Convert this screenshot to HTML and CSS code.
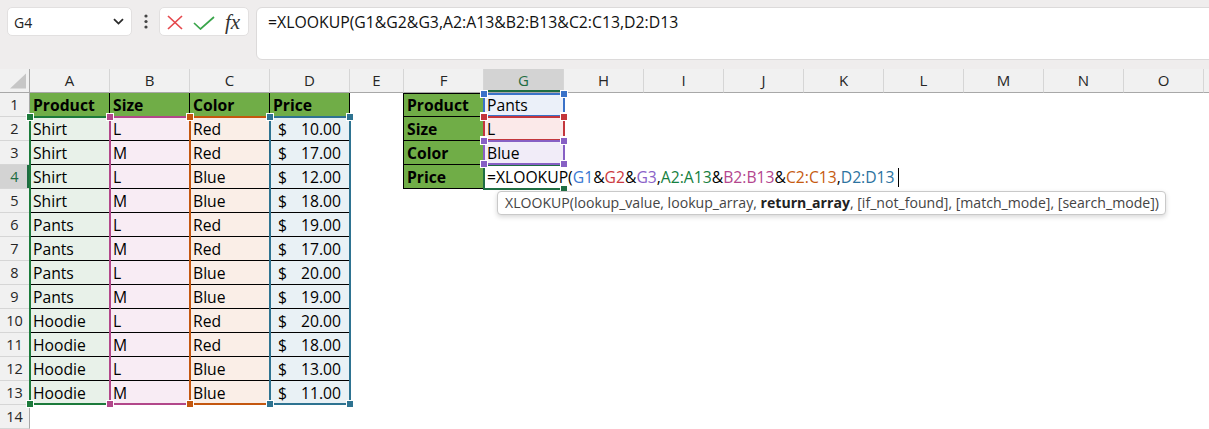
FILE: index.html
```html
<!DOCTYPE html>
<html>
<head>
<meta charset="utf-8">
<link rel="stylesheet" href="styles.css">
</head>
<body>
<div class="toolbar">
  <div class="namebox"><span>G4</span>
    <svg class="chev" width="11" height="7" viewBox="0 0 11 7"><path d="M1 1.2 L5.5 5.6 L10 1.2" fill="none" stroke="#2b2b2b" stroke-width="1.8"/></svg>
  </div>
  <div class="dots"><svg width="4" height="15" viewBox="0 0 4 15"><circle cx="2" cy="2" r="1.6" fill="#444"/><circle cx="2" cy="7.5" r="1.6" fill="#444"/><circle cx="2" cy="13" r="1.6" fill="#444"/></svg></div>
  <div class="fbtns">
    <svg class="ix" width="16" height="15" viewBox="0 0 16 15"><path d="M1 1 L15 14 M15 1 L1 14" stroke="#e5484d" stroke-width="1.7" fill="none"/></svg>
    <svg class="ic" width="22" height="14" viewBox="0 0 22 14"><path d="M1 7 L7.5 13 L21 1" stroke="#3aa54b" stroke-width="1.7" fill="none"/></svg>
    <span class="fx">fx</span>
  </div>
  <div class="fbar">=XLOOKUP(G1&amp;G2&amp;G3,A2:A13&amp;B2:B13&amp;C2:C13,D2:D13</div>
</div>

<div class="sheet">
  <div class="grid">
    <div class="corner"><svg width="30" height="23" viewBox="0 0 30 23"><path d="M10 19.5 L26 19.5 L26 4.5 Z" fill="#c6c6c6"/></svg></div>
    <div class="ch">A</div><div class="ch">B</div><div class="ch">C</div><div class="ch">D</div><div class="ch">E</div><div class="ch">F</div><div class="ch sel">G</div><div class="ch">H</div><div class="ch">I</div><div class="ch">J</div><div class="ch">K</div><div class="ch">L</div><div class="ch">M</div><div class="ch">N</div><div class="ch">O</div><div class="ch last"></div>

    <div class="rh">1</div>
    <div class="c g">Product</div><div class="c g">Size</div><div class="c g">Color</div><div class="c g">Price</div>
    <div class="sp"></div>
    <div class="c g ff ft">Product</div><div class="c g1">Pants</div>

    <div class="rh">2</div>
    <div class="c fa">Shirt</div><div class="c fb">L</div><div class="c fc">Red</div><div class="c fd"><span>$</span><span>10.00</span></div>
    <div class="sp"></div>
    <div class="c g ff">Size</div><div class="c g2">L</div>

    <div class="rh">3</div>
    <div class="c fa">Shirt</div><div class="c fb">M</div><div class="c fc">Red</div><div class="c fd"><span>$</span><span>17.00</span></div>
    <div class="sp"></div>
    <div class="c g ff">Color</div><div class="c g3">Blue</div>

    <div class="rh sel">4</div>
    <div class="c fa">Shirt</div><div class="c fb">L</div><div class="c fc">Blue</div><div class="c fd"><span>$</span><span>12.00</span></div>
    <div class="sp"></div>
    <div class="c g ff">Price</div>
    <div class="c edit"><span>=XLOOKUP(</span><span class="k1">G1</span>&amp;<span class="k2">G2</span>&amp;<span class="k3">G3</span>,<span class="k4">A2:A13</span>&amp;<span class="k5">B2:B13</span>&amp;<span class="k6">C2:C13</span>,<span class="k7">D2:D13</span><i class="caret"></i></div>

    <div class="rh">5</div>
    <div class="c fa">Shirt</div><div class="c fb">M</div><div class="c fc">Blue</div><div class="c fd"><span>$</span><span>18.00</span></div>

    <div class="rh">6</div>
    <div class="c fa">Pants</div><div class="c fb">L</div><div class="c fc">Red</div><div class="c fd"><span>$</span><span>19.00</span></div>

    <div class="rh">7</div>
    <div class="c fa">Pants</div><div class="c fb">M</div><div class="c fc">Red</div><div class="c fd"><span>$</span><span>17.00</span></div>

    <div class="rh">8</div>
    <div class="c fa">Pants</div><div class="c fb">L</div><div class="c fc">Blue</div><div class="c fd"><span>$</span><span>20.00</span></div>

    <div class="rh">9</div>
    <div class="c fa">Pants</div><div class="c fb">M</div><div class="c fc">Blue</div><div class="c fd"><span>$</span><span>19.00</span></div>

    <div class="rh">10</div>
    <div class="c fa">Hoodie</div><div class="c fb">L</div><div class="c fc">Red</div><div class="c fd"><span>$</span><span>20.00</span></div>

    <div class="rh">11</div>
    <div class="c fa">Hoodie</div><div class="c fb">M</div><div class="c fc">Red</div><div class="c fd"><span>$</span><span>18.00</span></div>

    <div class="rh">12</div>
    <div class="c fa">Hoodie</div><div class="c fb">L</div><div class="c fc">Blue</div><div class="c fd"><span>$</span><span>13.00</span></div>

    <div class="rh">13</div>
    <div class="c fa">Hoodie</div><div class="c fb">M</div><div class="c fc">Blue</div><div class="c fd"><span>$</span><span>11.00</span></div>

    <div class="rh">14</div>
  </div>

  <div class="hl">
    <div class="r ra"><i class="tl"></i><i class="tr"></i><i class="bl"></i><i class="br"></i></div>
    <div class="r rb"><i class="tl"></i><i class="tr"></i><i class="bl"></i><i class="br"></i></div>
    <div class="r rc"><i class="tl"></i><i class="tr"></i><i class="bl"></i><i class="br"></i></div>
    <div class="r rd"><i class="tl"></i><i class="tr"></i><i class="bl"></i><i class="br"></i></div>
    <div class="act"><i class="br"></i></div>
    <div class="r rg1"><i class="tl"></i><i class="tr"></i><i class="bl"></i><i class="br"></i></div>
    <div class="r rg2"><i class="tl"></i><i class="tr"></i><i class="bl"></i><i class="br"></i></div>
    <div class="r rg3"><i class="tl"></i><i class="tr"></i><i class="bl"></i><i class="br"></i></div>
  </div>

  <div class="tip">XLOOKUP(lookup_value, lookup_array, <b>return_array</b>, [if_not_found], [match_mode], [search_mode])</div>
</div>
</body>
</html>
```

FILE: styles.css
```css
* { box-sizing: border-box; }

body {
  margin: 0;
  width: 1209px;
  height: 429px;
  overflow: hidden;
  background: #fff;
  font-family: "Open Sans", "Noto Sans", sans-serif;
  color: #000;
}

/* ---------- formula toolbar ---------- */
.toolbar {
  height: 69px;
  display: flex;
  align-items: flex-start;
  padding: 7px 0 0 7px;
  background: #efeded;
  overflow: hidden;
}

.namebox {
  width: 125px;
  height: 29px;
  background: #fff;
  border: 1px solid #e2e0e0;
  border-radius: 5px;
  display: flex;
  align-items: center;
  justify-content: space-between;
  padding: 2px 7px 0 6px;
  font-size: 14px;
  color: #222;
}

.chev { margin-top: -2px; }

.dots {
  width: 27px;
  height: 29px;
  display: flex;
  align-items: center;
  justify-content: center;
}

.fbtns {
  width: 90px;
  height: 29px;
  background: #fff;
  border: 1px solid #e2e0e0;
  border-radius: 5px;
  display: flex;
  align-items: center;
  padding: 1px 0 0 7px;
}

.ix { margin-top: 1px; }
.ic { margin-left: 10px; margin-top: 1px; }

.fx {
  margin-left: 10px;
  font-family: "Liberation Serif", "DejaVu Serif", serif;
  font-style: italic;
  font-size: 21px;
  line-height: 22px;
  color: #333;
}

.fbar {
  flex: 1;
  height: 53px;
  margin-left: 7px;
  margin-right: -12px;
  background: #fff;
  border: 1px solid #dcdada;
  border-radius: 6px;
  padding: 3px 0 0 11px;
  font-size: 15.8px;
  line-height: 22px;
  color: #111;
  white-space: nowrap;
}

/* ---------- sheet ---------- */
.sheet {
  position: relative;
  height: 360px;
}

.grid,
.hl {
  display: grid;
  grid-template-columns: 30px repeat(4, 80px) 54px repeat(10, 80px) 1fr;
  grid-template-rows: repeat(15, 24px);
}

.hl {
  position: absolute;
  inset: 0;
  pointer-events: none;
}

.corner {
  background: #f1f1f1;
  border-right: 1px solid #a8a8a8;
  border-bottom: 1px solid #a8a8a8;
}
.corner svg { display: block; }

.ch {
  background: #f1f1f1;
  border-right: 1px solid #d6d6d6;
  border-bottom: 1px solid #a8a8a8;
  text-align: center;
  font-size: 15px;
  line-height: 23px;
  color: #262626;
}
.ch.last { border-right: 0; }
.ch.sel {
  background: #d3d3d3;
  color: #1e6c41;
  box-shadow: inset 0 -2px 0 #1e6c41;
}

.rh {
  grid-column: 1;
  background: #f1f1f1;
  border-right: 1px solid #a8a8a8;
  border-bottom: 1px solid #d6d6d6;
  text-align: center;
  padding-top: 1px;
  font-size: 14.5px;
  line-height: 22px;
  color: #262626;
}
.rh.sel {
  background: #d3d3d3;
  color: #1e6c41;
  box-shadow: inset -2px 0 0 #1e6c41;
}

.c {
  border-right: 1px solid #000;
  border-bottom: 1px solid #000;
  padding: 1px 0 0 3px;
  font-size: 15.7px;
  line-height: 22px;
  white-space: nowrap;
}

.g { background: #70ad47; font-weight: 700; }
.ff { box-shadow: -1px 0 0 #000; }
.ft { box-shadow: -1px 0 0 #000, inset 0 1px 0 #000; }

.fa { background: #e8f1e9; }
.fb { background: #f8ecf4; }
.fc { background: #faeee7; }
.fd {
  background: #e9f1f5;
  display: flex;
  justify-content: space-between;
  padding: 1px 8px 0 8px;
}

.g1 { background: #ebf0f9; }
.g2 { background: #fbe9e9; }
.g3 { background: #f1ecf8; }

.edit {
  position: relative;
  z-index: 2;
  background: transparent;
  border: 0;
  overflow: visible;
}

.k1 { color: #3a78d2; }
.k2 { color: #cc3a40; }
.k3 { color: #8a62c8; }
.k4 { color: #168040; }
.k5 { color: #b4468e; }
.k6 { color: #c65b10; }
.k7 { color: #2c73a0; }

.caret {
  display: inline-block;
  width: 1px;
  height: 19px;
  margin-left: 3px;
  vertical-align: -4px;
  background: #000;
}

/* ---------- range highlights ---------- */
.r,
.act {
  position: relative;
  border: 2px solid;
  margin: -1px -1px 0 -1px;
}

.r i,
.act i {
  position: absolute;
  width: 6px;
  height: 6px;
  background: currentColor;
  box-shadow: 0 0 0 1px #fff;
}

.tl { left: -4px; top: -4px; }
.tr { right: -4px; top: -4px; }
.bl { left: -4px; bottom: -4px; }
.br { right: -4px; bottom: -4px; }

.ra { grid-column: 2; grid-row: 3 / 15; color: #1c7a3b; }
.rb { grid-column: 3; grid-row: 3 / 15; color: #b2478a; }
.rc { grid-column: 4; grid-row: 3 / 15; color: #c4570f; }
.rd { grid-column: 5; grid-row: 3 / 15; color: #2e7391; }

.act {
  grid-column: 8;
  grid-row: 5;
  color: #1f6e43;
  margin: -1px;
  border-right-color: transparent;
}

.rg1 { grid-column: 8; grid-row: 2; color: #3a72c8; margin-top: 0; }
.rg2 { grid-column: 8; grid-row: 3; color: #c3363c; }
.rg3 { grid-column: 8; grid-row: 4; color: #8760c4; }

/* ---------- function tooltip ---------- */
.tip {
  position: absolute;
  left: 497px;
  top: 122px;
  height: 24px;
  padding: 0 6px 0 7px;
  background: #fff;
  border: 1px solid #c9c9c9;
  border-radius: 4px;
  box-shadow: 0 2px 5px rgba(0, 0, 0, 0.16);
  font-size: 14.1px;
  line-height: 22px;
  color: #444;
  white-space: nowrap;
  z-index: 3;
}
.tip b { color: #222; }
```
